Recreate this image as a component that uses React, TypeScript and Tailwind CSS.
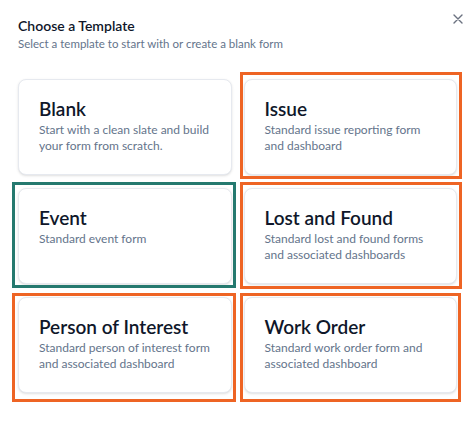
import { ReactNode } from "react";

type Template = {
    title: string;
    description: string;
    mark?: ReactNode;
};

// highlight frames drawn around some of the template cards
const orangeFrame = "pointer-events-none absolute border-[3px] border-[#ee6424]";
const tealFrame = "pointer-events-none absolute border-[3px] border-[#25796f]";

const templates: Template[] = [
    {
        title: "Blank",
        description: "Start with a clean slate and build your form from scratch.",
    },
    {
        title: "Issue",
        description: "Standard issue reporting form and dashboard",
        mark: <div className={`${orangeFrame} -left-[4px] -top-[7px] -right-[5px] -bottom-[4px]`} />,
    },
    {
        title: "Event",
        description: "Standard event form",
        mark: <div className={`${tealFrame} -left-[6px] -top-[6px] -right-[4px] -bottom-[4px]`} />,
    },
    {
        title: "Lost and Found",
        description: "Standard lost and found forms and associated dashboards",
        mark: <div className={`${orangeFrame} -left-[4px] -top-[6px] -right-[5px] -bottom-[5px]`} />,
    },
    {
        title: "Person of Interest",
        description: "Standard person of interest form and associated dashboard",
        mark: <div className={`${orangeFrame} -left-[6px] -top-[4px] -right-[4px] -bottom-[9px]`} />,
    },
    {
        title: "Work Order",
        description: "Standard work order form and associated dashboard",
        mark: <div className={`${orangeFrame} -left-[4px] -top-[4px] -right-[4px] -bottom-[9px]`} />,
    },
];

function TemplateCard({ template }: { template: Template }) {
    return (
        <div className="relative">
            <div className="flex h-[96px] cursor-pointer flex-col rounded-lg border border-[#e6e9ef] bg-white px-5 pt-[15px] shadow-sm">
                <h3 className="text-[19px] font-semibold leading-[27px] text-[#0f172a]">
                    {template.title}
                </h3>
                <p className="text-[12px] leading-4 text-[#64748b]">{template.description}</p>
            </div>
            {template.mark}
        </div>
    );
}

export default function App() {
    return (
        <div
            className="h-[423px] w-[475px] bg-white pl-[18px] pr-[18px] pt-4"
            style={{ fontFamily: 'Lato, "Noto Sans", sans-serif' }}
        >
            <div className="flex items-start justify-between">
                <div>
                    <h2 className="text-[14px] font-semibold leading-5 text-[#0f172a]">
                        Choose a Template
                    </h2>
                    <p className="text-[11.5px] leading-4 text-[#64748b]">
                        Select a template to start with or create a blank form
                    </p>
                </div>
                <button className="-mr-[6px] -mt-[2px] text-[#6b7280]">
                    <svg width="10" height="10" viewBox="0 0 10 10" fill="none">
                        <path d="M1 1L9 9M9 1L1 9" stroke="currentColor" strokeWidth="1.4" strokeLinecap="round" />
                    </svg>
                </button>
            </div>
            <div className="mt-[27px] grid grid-cols-2 gap-x-3 gap-y-[13px]">
                {templates.map((t) => (
                    <TemplateCard key={t.title} template={t} />
                ))}
            </div>
        </div>
    );
}
